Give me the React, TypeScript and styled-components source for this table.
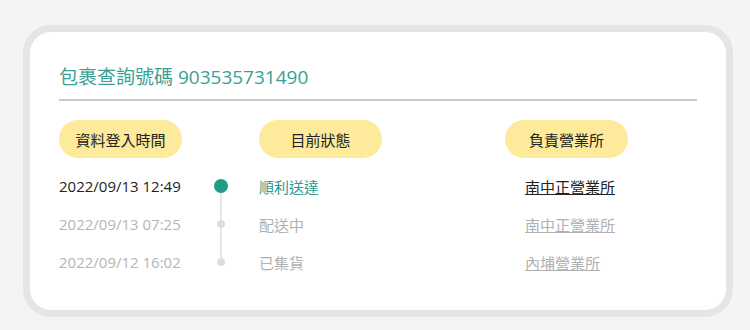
import React from 'react';
import styled, { createGlobalStyle } from 'styled-components';

const GlobalStyle = createGlobalStyle`
    html, body {
        margin:0;
        padding:0;
        background:#f4f4f4;
        font-family:"Open Sans", "Noto Sans CJK TC", sans-serif;
    }
`;

const records = [
    { time: '2022/09/13 12:49', status: '順利送達', station: '南中正營業所' },
    { time: '2022/09/13 07:25', status: '配送中', station: '南中正營業所' },
    { time: '2022/09/12 16:02', status: '已集貨', station: '內埔營業所' },
];

const App = () => {
    return (
        <Page>
            <GlobalStyle />
            <Card>
                <Title>包裹查詢號碼 903535731490</Title>
                <Divider />
                <HeaderRow>
                    <Pill>資料登入時間</Pill>
                    <Pill>目前狀態</Pill>
                    <Pill>負責營業所</Pill>
                </HeaderRow>
                {records.map((r, i) => (
                    <Row key={i}>
                        <Time $active={i === 0}>{r.time}</Time>
                        <DotCell $first={i === 0} $last={i === records.length - 1}>
                            <Dot $active={i === 0} />
                        </DotCell>
                        <Status $active={i === 0}>{r.status}</Status>
                        <Station href="#" $active={i === 0}>{r.station}</Station>
                    </Row>
                ))}
            </Card>
        </Page>
    );
};

export default App;

const Page = styled.div`
    width:750px;
    height:330px;
    padding:25px 17px 0 23px;
    box-sizing:border-box;
`;

const Card = styled.div`
    width:710px;
    height:292px;
    box-sizing:border-box;
    background:#fff;
    border:7px solid #e5e5e5;
    border-radius:28px;
    padding:31px 29px 0 29px;
`;

const Title = styled.div`
    font-size:19px;
    line-height:28px;
    color:#3a9f95;
`;

const Divider = styled.div`
    height:2px;
    margin-top:8px;
    background:#c9c9c9;
`;

const HeaderRow = styled.div`
    display:grid;
    grid-template-columns:200px 246px 1fr;
    margin-top:19px;
    margin-bottom:9px;
`;

const Pill = styled.div`
    width:123px;
    height:38px;
    border-radius:19px;
    background:#fdea9b;
    color:#222;
    font-size:15px;
    display:flex;
    align-items:center;
    justify-content:center;
`;

const Row = styled.div`
    display:grid;
    grid-template-columns:142px 40px 264px 1fr;
    height:38px;
    align-items:center;
    font-size:15px;
`;

const Time = styled.div<{ $active: boolean }>`
    color:${p => (p.$active ? '#222' : '#b5b5b5')};
`;

const DotCell = styled.div<{ $first: boolean; $last: boolean }>`
    position:relative;
    height:100%;
    display:flex;
    align-items:center;
    justify-content:center;
    &::before{
        content:'';
        position:absolute;
        left:19px;
        width:2px;
        top:${p => (p.$first ? '50%' : '0')};
        bottom:${p => (p.$last ? '50%' : '0')};
        background:#e6e6e6;
    }
`;

const Dot = styled.span<{ $active: boolean }>`
    position:relative;
    width:${p => (p.$active ? '14px' : '8px')};
    height:${p => (p.$active ? '14px' : '8px')};
    border-radius:50%;
    background:${p => (p.$active ? '#1f9d87' : '#dddddd')};
`;

const Status = styled.div<{ $active: boolean }>`
    padding-left:18px;
    color:${p => (p.$active ? '#2a9d8f' : '#b0b0b0')};
`;

const Station = styled.a<{ $active: boolean }>`
    padding-left:20px;
    color:${p => (p.$active ? '#222' : '#b0b0b0')};
    text-decoration:underline;
    justify-self:start;
`;
